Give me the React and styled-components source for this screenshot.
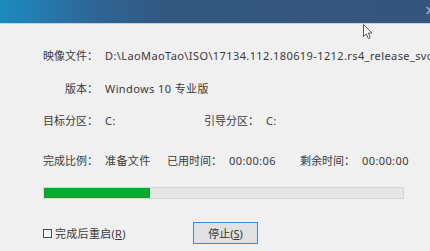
import React from "react";
import styled, { createGlobalStyle } from "styled-components";

const GlobalStyle = createGlobalStyle`
  html, body {
    margin: 0;
    padding: 0;
    background: #f0f0f0;
  }
`;

const Window = styled.div`
  position: relative;
  width: 430px;
  height: 251px;
  overflow: hidden;
  background: #f0f0f0;
  font-family: "Noto Sans", "Noto Sans CJK SC", sans-serif;
  font-size: 11px;
  color: #3a3a3a;
  display: flex;
  flex-direction: column;
`;

const TitleBar = styled.div`
  height: 23px;
  flex: none;
  display: flex;
  justify-content: flex-end;
  align-items: flex-start;
  background: linear-gradient(
    to right,
    #1a8cbd 0%,
    #2677a8 12%,
    #2f6391 24%,
    #33577f 40%,
    #34557e 100%
  );
  border-bottom: 1px solid #c3cfdd;
`;

const Close = styled.span`
  color: #a9c6e6;
  font-family: "DejaVu Sans", sans-serif;
  font-size: 14px;
  line-height: 14px;
  margin-top: 3px;
  margin-right: -6px;
`;

const Body = styled.div`
  padding: 24px 0 0 43px;
  display: flex;
  flex-direction: column;
`;

const Row = styled.div`
  display: flex;
  align-items: center;
  height: 16px;
  line-height: 16px;
  white-space: nowrap;
  margin-top: ${(p) => p.$gap || 0}px;
`;

const Label = styled.span`
  flex: none;
  width: ${(p) => p.$width || 55}px;
  text-align: right;
`;

const Value = styled.span`
  flex: none;
  margin-left: 7px;
  letter-spacing: 0.4px;
  width: ${(p) => (p.$width ? `${p.$width}px` : "auto")};
`;

const Track = styled.div`
  margin-top: 18px;
  width: 359px;
  height: 10px;
  background: #e6e6e6;
  border: 1px solid #d6d6d6;
  flex: none;
`;

const Fill = styled.div`
  height: 100%;
  width: ${(p) => p.$value}%;
  background: #0aa92d;
`;

const Footer = styled.div`
  margin-top: 23px;
  display: flex;
  align-items: center;
  height: 22px;
`;

const CheckLabel = styled.label`
  width: 150px;
  display: flex;
  align-items: center;
  gap: 3px;
  white-space: nowrap;
  letter-spacing: 0.3px;
`;

const Box = styled.span`
  width: 7px;
  height: 7px;
  border: 1px solid #4a4a4a;
  background: #f4f4f4;
  flex: none;
`;

const Button = styled.button`
  width: 65px;
  height: 22px;
  padding: 0;
  font: inherit;
  color: #333;
  background: #e1e1e1;
  border: 1px solid #3c8ddb;
  box-shadow: inset 0 0 0 1px #cfe2f6;
`;

const Cursor = styled.svg`
  position: absolute;
  left: 363px;
  top: 24px;
`;

const Key = styled.u`
  text-underline-offset: 1px;
`;

export default function App() {
  return (
    <>
      <GlobalStyle />
      <Window>
        <TitleBar>
          <Close>×</Close>
        </TitleBar>
        <Body>
          <Row $gap={0}>
            <Label>映像文件：</Label>
            <Value>
              D:\LaoMaoTao\ISO\17134.112.180619-1212.rs4_release_svc_refresh_CLIENTCONSUMER_RET_x64FRE_zh-cn.iso
            </Value>
          </Row>
          <Row $gap={17}>
            <Label>版本：</Label>
            <Value>Windows 10 专业版</Value>
          </Row>
          <Row $gap={16}>
            <Label>目标分区：</Label>
            <Value $width={99}>C:</Value>
            <Label>引导分区：</Label>
            <Value>C:</Value>
          </Row>
          <Row $gap={24}>
            <Label>完成比例：</Label>
            <Value $width={62}>准备文件</Value>
            <Label>已用时间：</Label>
            <Value $width={71}>00:00:06</Value>
            <Label>剩余时间：</Label>
            <Value>00:00:00</Value>
          </Row>
          <Track>
            <Fill $value={29.6} />
          </Track>
          <Footer>
            <CheckLabel>
              <Box />
              <span>
                完成后重启(<Key>R</Key>)
              </span>
            </CheckLabel>
            <Button>
              停止(<Key>S</Key>)
            </Button>
          </Footer>
        </Body>
        <Cursor width="11" height="16" viewBox="0 0 11 16">
          <path
            d="M0.5 0.5 L0.5 12.5 L3.3 9.8 L5.3 14.5 L7.3 13.6 L5.4 9 L9 9 Z"
            fill="#ffffff"
            stroke="#555"
            strokeWidth="1"
            strokeLinejoin="round"
          />
        </Cursor>
      </Window>
    </>
  );
}
